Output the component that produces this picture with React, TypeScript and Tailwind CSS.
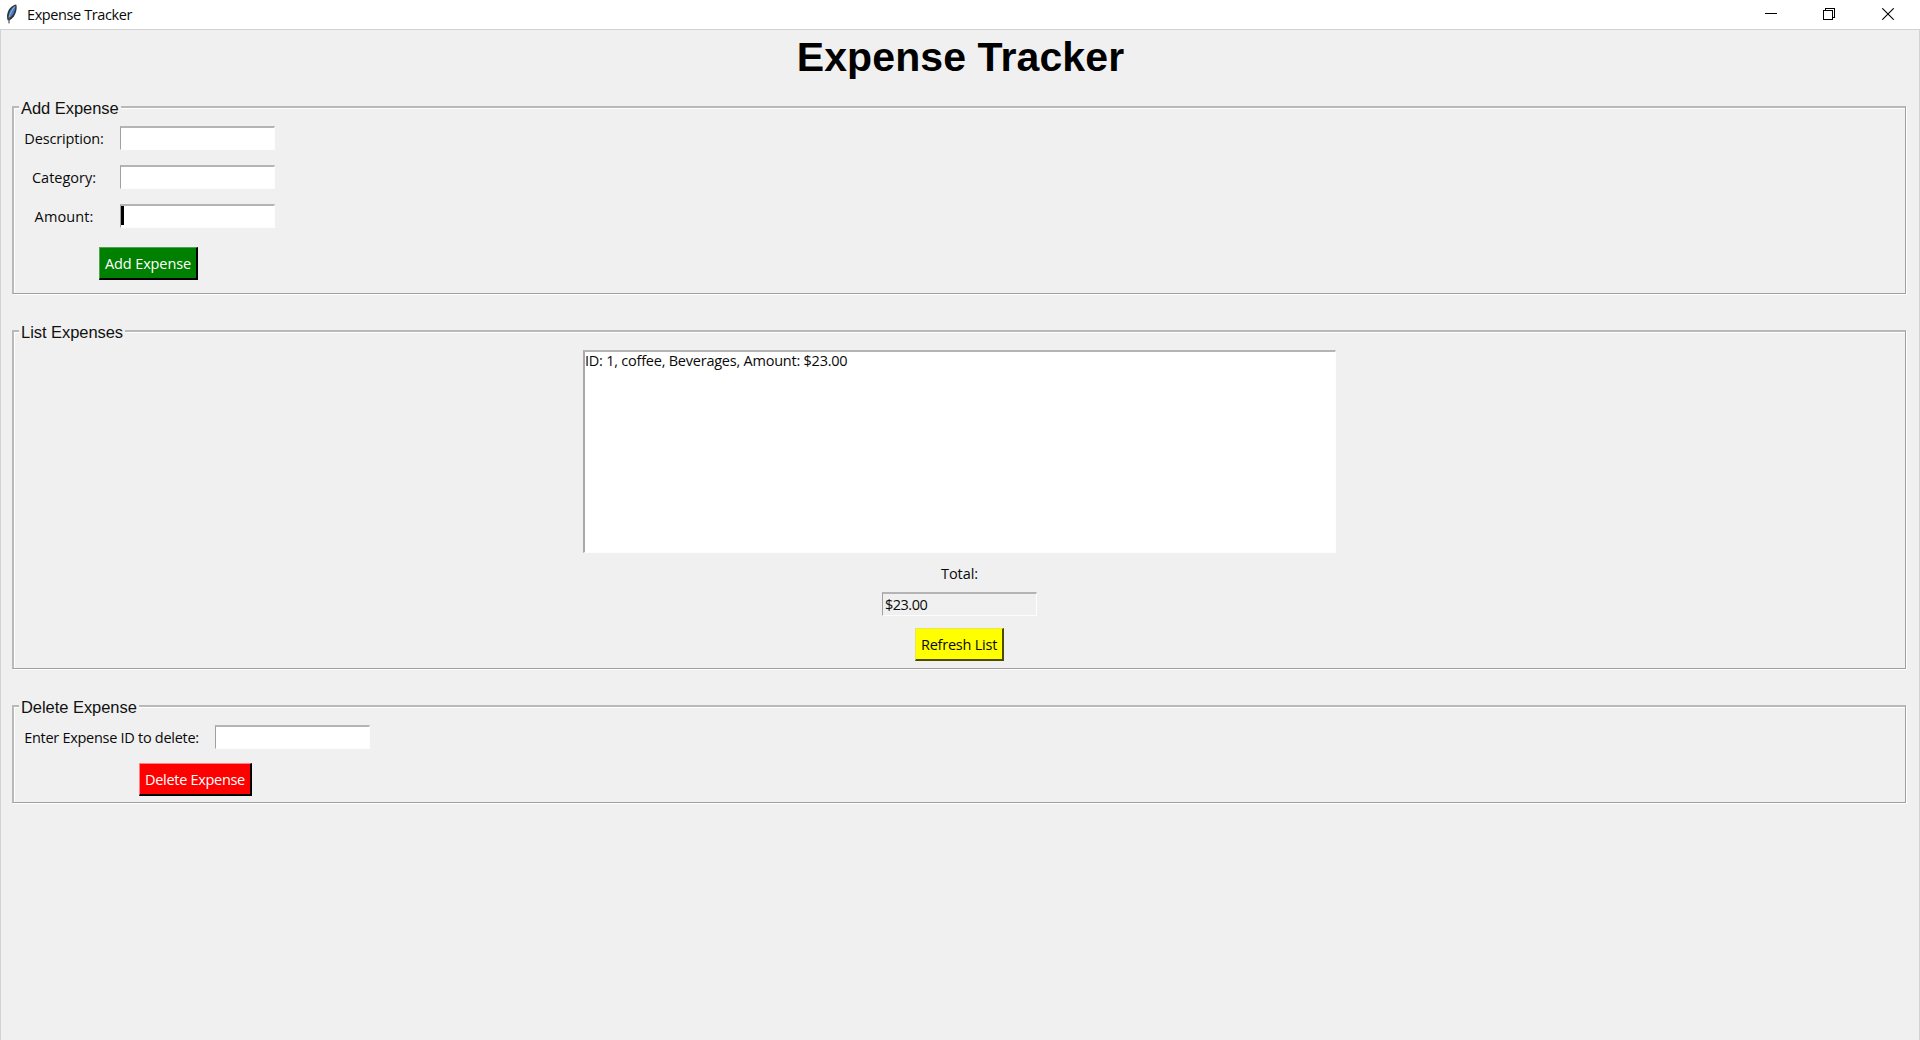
import type { ReactNode } from "react";

function Feather() {
  return (
    <svg width="12" height="20" viewBox="0 0 12 20" className="block">
      <path d="M10.2 0.4C7 0.8 3.6 3.6 2 7.4c-1 2.600-1.300 5.400-0.500 8.600l1.100 0.600c2.400-0.800 5-3 6.600-6.600C10.600 6.600 11.200 3 10.200 0.400z" fill="#2d3036" />
      <path d="M9.300 1.800C6.600 3 4.200 5.600 3.200 8.800c-0.600 2-0.700 4-0.500 5.900 2.400-1.500 4.300-3.500 5.400-6.200 1-2.300 1.500-4.500 1.200-6.700z" fill="#4579bd" />
      <path d="M8.800 2.400C6 5.800 4.200 9.600 3 13.600" stroke="#9dbfe8" strokeWidth="0.9" fill="none" />
      <path d="M3.400 13.200L2.900 19.400" stroke="#55504c" strokeWidth="1.200" fill="none" />
    </svg>
  );
}

function TitleBar() {
  return (
    <header className="flex h-[29px] items-start justify-between bg-white">
      <div className="flex items-start pt-1 pl-1.5">
        <Feather />
        <span className="ml-[9px] leading-[22px] tracking-[-0.4px]">Expense Tracker</span>
      </div>
      <div className="flex pt-2 pr-[26px]">
        <svg width="12" height="12" viewBox="0 0 12 12" shapeRendering="crispEdges">
          <path d="M0 5.500h12" stroke="#000" />
        </svg>
        <svg className="ml-[46px]" width="12" height="12" viewBox="0 0 12 12" fill="none" stroke="#000" shapeRendering="crispEdges">
          <path d="M0.500 2.500h9v9h-9zM2.500 2.500v-2h9v9h-2" />
        </svg>
        <svg className="ml-[47px]" width="12" height="12" viewBox="0 0 12 12" stroke="#000" strokeWidth="1.100">
          <path d="M0.300 0.300l11.400 11.400M11.700 0.300L0.300 11.700" />
        </svg>
      </div>
    </header>
  );
}

function Group({ title, className, children }: { title: string; className: string; children: ReactNode }) {
  return (
    <section
      className={`relative border border-t-2 border-l-2 border-[#b9b9b9] border-r-[#a0a0a0] border-b-[#a0a0a0] shadow-[inset_1px_1px_0_#fff,1px_1px_0_#fff] ${className}`}
    >
      <h2 className="absolute -top-2.5 left-[5px] bg-[#f0f0f0] pr-0.5 pl-0.5 font-['Liberation_Sans',Arial,sans-serif] text-[16.5px] leading-5 font-normal tracking-[-0.05px] whitespace-nowrap text-[#111]">
        {title}
      </h2>
      {children}
    </section>
  );
}

function Entry({ value = "", readOnly = false, caret = false }: { value?: string; readOnly?: boolean; caret?: boolean }) {
  return (
    <div
      className={`flex h-6 w-[155px] border border-t-2 border-[#fdfdfd] border-t-[#b4b4b4] border-l-[#a0a0a0] leading-[21px] ${readOnly ? "bg-[#f0f0f0] pl-0.5" : "bg-white"}`}
    >
      {caret && <span className="h-[19px] w-[3px] bg-black" />}
      <span className="tracking-[-0.5px]">{value}</span>
    </div>
  );
}

function Label({ children, className }: { children: string; className: string }) {
  return <label className={`block h-6 text-center leading-[26px] whitespace-nowrap ${className}`}>{children}</label>;
}

export default function App() {
  return (
    <div className="flex h-[1040px] w-[1920px] flex-col overflow-hidden bg-[#f0f0f0] font-['Open_Sans','Noto_Sans',sans-serif] text-[14.5px] text-[#0a0a0a]">
      <TitleBar />
      <main className="flex-1 border border-b-0 border-[#d2d2d2] pr-[13px] pl-[11px]">
        <h1 className="h-[76px] pt-[3px] pl-[3px] text-center font-['Liberation_Sans',Arial,sans-serif] text-[41px] leading-[48px] font-bold tracking-[0.1px] text-black">
          Expense Tracker
        </h1>

        <Group title="Add Expense" className="h-[188px] pt-[18px] pl-2.5">
          <div className="flex flex-col gap-[15px]">
            <div className="flex gap-4">
              <Label className="w-20 tracking-[-0.15px]">Description:</Label>
              <Entry />
            </div>
            <div className="flex gap-4">
              <Label className="w-20">Category:</Label>
              <Entry />
            </div>
            <div className="flex gap-4">
              <Label className="w-20 tracking-[0.1px]">Amount:</Label>
              <Entry caret />
            </div>
          </div>
          <button className="mt-[19px] ml-[75px] block h-[33px] w-[99px] border border-t-[#4da64d] border-r-2 border-b-2 border-l-[#4da64d] border-r-black border-b-black bg-[#008000] pt-0.5 leading-[28px] tracking-[-0.12px] text-white">
            Add Expense
          </button>
        </Group>

        <Group title="List Expenses" className="mt-9 flex h-[339px] flex-col items-center pt-[18px]">
          <div className="h-[203px] w-[753px] border border-t-2 border-l-2 border-[#fdfdfd] border-t-[#b4b4b4] border-l-[#a8a8a8] bg-white leading-[18px] tracking-[-0.23px] whitespace-nowrap">
            ID: 1, coffee, Beverages, Amount: $23.00
          </div>
          <Label className="mt-2 mb-[7px] tracking-[-0.1px]">Total:</Label>
          <Entry value="$23.00" readOnly />
          <button className="mt-3 h-[33px] w-[89px] border border-t-[#e6e64d] border-r-2 border-b-2 border-l-[#e6e64d] border-r-[#4c4c00] border-b-[#4c4c00] bg-[#ffff00] pt-0.5 leading-[28px] tracking-[-0.23px]">
            Refresh List
          </button>
        </Group>

        <Group title="Delete Expense" className="mt-9 h-[98px] pt-[18px] pl-2.5">
          <div className="flex gap-4">
            <Label className="w-[175px] tracking-[-0.28px]">Enter Expense ID to delete:</Label>
            <Entry />
          </div>
          <button className="mt-[14px] ml-[115px] block h-[33px] w-[113px] border border-t-[#ff8080] border-r-2 border-b-2 border-l-[#ff8080] border-r-black border-b-black bg-[#ff0000] pt-0.5 leading-[28px] tracking-[-0.3px] text-white">
            Delete Expense
          </button>
        </Group>
      </main>
    </div>
  );
}
